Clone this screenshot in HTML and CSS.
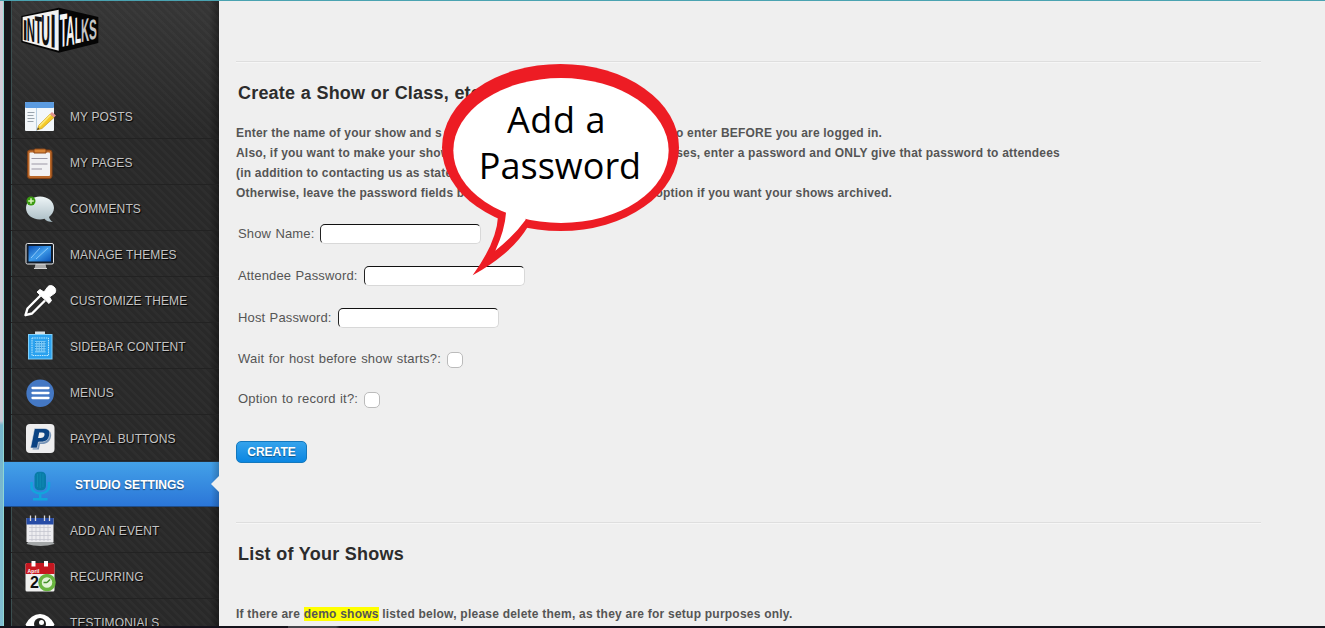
FILE: index.html
```html
<!DOCTYPE html>
<html lang="en">
<head>
    <meta charset="UTF-8">
    <meta name="viewport" content="width=device-width, initial-scale=1.0">
    <title>Studio Settings - IntuiTalks</title>
    <link rel="stylesheet" href="styles.css">
</head>
<body>
    <div class="page">
        <div class="window-edge"></div>
        <aside class="sidebar">
            <a href="#" class="logo">
                <svg width="80" height="46" viewBox="60 20 240 138">
                    <polygon points="64,47 176,22 295,50 295,128 176,157 64,126" fill="#050505"/>
                    <polygon points="68,50 176,28 176,151 68,122" fill="#f2f2f2"/>
                    <g class="logo-text" fill="#111">
                        <text transform="translate(68 118) skewY(10) scale(.75 1.28)">I</text>
                        <text transform="translate(80 121) skewY(9) scale(.5 1.45)">N</text>
                        <text transform="translate(104 127) skewY(9) scale(.52 1.7)">T</text>
                        <text transform="translate(124 132) skewY(9) scale(.53 1.88)">U</text>
                        <text transform="translate(151 140) skewY(10) scale(.9 2.1)">I</text>
                    </g>
                    <g class="logo-text" fill="#f4f4f4">
                        <text transform="translate(179 141) skewY(-11) scale(.54 2.08)">T</text>
                        <text transform="translate(198 137) skewY(-11) scale(.53 1.85)">A</text>
                        <text transform="translate(224 130) skewY(-11) scale(.46 1.65)">L</text>
                        <text transform="translate(243 126) skewY(-11) scale(.5 1.45)" fill="#c4c4c4">K</text>
                        <text transform="translate(267 119) skewY(-11) scale(.52 1.25)" fill="#c4c4c4">S</text>
                    </g>
                </svg>
            </a>
            <ul class="menu">
                <li><a href="#">
                    <svg class="icon" viewBox="0 0 32 32">
                        <rect x="1" y="2" width="29" height="29" rx="1" fill="#f3f7fa"/>
                        <rect x="1" y="2" width="29" height="6" rx="1" fill="#5b9be0"/>
                        <path d="M12.5 8v23" stroke="#b9cfe2"/>
                        <path d="M3.5 12.5h7M3.5 15.5h6M3.5 18.5h7M3.5 21.5h6" stroke="#9aa4ad"/>
                        <path d="M13 30l2-5L26 14l4 3.500L18 28.500z" fill="#f5ca28" stroke="#b98a12" stroke-width=".6"/>
                        <path d="M14.800 25.500L26 14l1.300 1.200L16 27z" fill="#fbe678"/>
                        <path d="M26 14l2-2 4 3.500-2 2z" fill="#e2948f"/>
                        <path d="M13 30l1-2.500 1.500 1.500z" fill="#444"/>
                    </svg>My Posts</a></li>
                <li><a href="#">
                    <svg class="icon" viewBox="0 0 32 32">
                        <rect x="3.500" y="4" width="24.500" height="28.500" rx="2.500" fill="#b9682a" stroke="#814015"/>
                        <rect x="5.500" y="6.500" width="20.500" height="23.500" rx="1" fill="#f1f1f3"/>
                        <path d="M10 7V4.500q0-1.500 1.500-1.500h9q1.500 0 1.500 1.500V7z" fill="#d88435" stroke="#8c4718"/>
                        <path d="M7.500 12.500h16M7.500 18h16M7.500 23h10.500" stroke="#9c98a5" stroke-width="1.200"/>
                    </svg>My Pages</a></li>
                <li><a href="#">
                    <svg class="icon" viewBox="0 0 32 32">
                        <defs><linearGradient id="bubble" x2="0" y2="1"><stop stop-color="#eef5f7"/><stop offset="1" stop-color="#a9bcc4"/></linearGradient></defs>
                        <path d="M16 4.500c8 0 14 5 14 11.500 0 4-2.500 7-5 9 .8 2.500 2 4 4 5-4 0-7-1-8.500-3.200-1.500.4-3 .6-4.500.6C8 27.400 2 22.500 2 16S8 4.500 16 4.500z" fill="url(#bubble)"/>
                        <circle cx="7" cy="9" r="4.500" fill="#3c9b13"/>
                        <path d="M7 6.200v5.600M4.200 9h5.600" stroke="#d9f5bd" stroke-width="1.500"/>
                    </svg>Comments</a></li>
                <li><a href="#">
                    <svg class="icon" viewBox="0 0 32 32">
                        <defs><linearGradient id="screen" x2="1" y2="1"><stop stop-color="#0b4fb5"/><stop offset=".5" stop-color="#3f9cea"/><stop offset="1" stop-color="#0a53b8"/></linearGradient></defs>
                        <path d="M11.500 26h10l1 4.500h-12z" fill="#aaa"/>
                        <path d="M10 30.500h13" stroke="#d5d5d5"/>
                        <rect x="2" y="5.500" width="27.500" height="20.500" rx="1.500" fill="#111b28" stroke="#e6e6e6"/>
                        <rect x="4.500" y="8" width="22.500" height="15.500" fill="url(#screen)"/>
                        <path d="M7 20l9-10M12 21L24 10" stroke="#8dcaf8" stroke-width="1"/>
                    </svg>Manage Themes</a></li>
                <li><a href="#">
                    <svg class="icon" viewBox="0 0 32 32">
                        <path d="M16.500 11.500L3.500 24.500 1.500 31.200 8 29.500 21 16.500" fill="#2a2a2a" stroke="#fff" stroke-width="2.400" stroke-linejoin="round"/>
                        <path d="M13 8l3-2.500 4 2.500 4-5.500C27-.500 34 4 31 9L25.500 13l2 3.500-2.500 3z" fill="#fff" stroke="#fff" stroke-linejoin="round"/>
                    </svg>Customize Theme</a></li>
                <li><a href="#">
                    <svg class="icon" viewBox="0 0 32 32">
                        <rect x="11" y="1.500" width="10" height="3" fill="#d5dee2"/>
                        <rect x="4.500" y="4.500" width="23.500" height="24.500" fill="#2ba2ef" stroke="#80d0fa"/>
                        <rect x="8" y="8" width="16.500" height="17.500" fill="none" stroke="#bce8fc" stroke-dasharray="1.500 .8"/>
                        <rect x="11" y="11" width="10.500" height="11.500" fill="#79c8f6"/>
                        <path d="M11 12.500h11M11 15h11M11 17.500h11M11 20h11" stroke="#1484d2" stroke-dasharray="1.200 1.200"/>
                    </svg>Sidebar Content</a></li>
                <li><a href="#">
                    <svg class="icon" viewBox="0 0 32 32">
                        <circle cx="16.200" cy="17.200" r="13.800" fill="#4478c4"/>
                        <path d="M8.500 12h16M8.500 17h16M8.500 22h16" stroke="#fff" stroke-width="2.300" stroke-linecap="round"/>
                    </svg>Menus</a></li>
                <li><a href="#">
                    <svg class="icon" viewBox="0 0 32 32">
                        <rect x="2" y="2" width="28.500" height="29" rx="4" fill="#eeeeef"/>
                        <path d="M12 9.500h14c1.500 2 1.500 4 .5 7-1.500 4-4.500 5.500-8.500 5.500h-2l-1.200 5.500H8.500z" fill="#7794b7"/>
                        <path d="M10.500 6.500H20c5 0 6.500 3 5.500 7-1 4.500-4 6.500-8.500 6.500h-2.500L13.200 26H6.500z" fill="#0b4383" stroke="#eeeeef" stroke-width=".6"/>
                        <path d="M15.200 10.500h2.800c2 0 2.800.8 2.500 2.500-.3 2-1.800 3-4 3h-2.400z" fill="#eeeeef"/>
                    </svg>Paypal Buttons</a></li>
                <li class="active"><a href="#">
                    <svg class="icon" viewBox="0 0 32 32">
                        <path d="M7.500 14v4c0 10 17.500 10 17.500 0v-4M16.200 25.500V31M9 31.200h14.500" fill="none" stroke="#12a5dc" stroke-width="2.500"/>
                        <rect x="10.500" y="3.700" width="11.500" height="18.500" rx="4.500" fill="#087ca8"/>
                        <path d="M13.500 6v13M16.200 5v15M19 6v13" stroke="#1291b5" stroke-width=".8"/>
                    </svg>Studio Settings</a></li>
                <li><a href="#">
                    <svg class="icon" viewBox="0 0 32 32">
                        <path d="M4 28h25l1.500 2q-14 4-28 0z" fill="#a5a8a9"/>
                        <rect x="2.500" y="4" width="27" height="24" fill="#ededf0"/>
                        <path d="M2.500 4h27v6.500h-27z" fill="#264ba5"/>
                        <path d="M5 13.500h22M5 17.500h22M5 21.500h22M5 25.500h22M8 11v16M12 11v16M16 11v16M20 11v16M24 11v16" stroke="#c0c2cb" stroke-width=".7"/>
                        <path d="M6.500 1.500V7M11.500 1.500V7M20.500 1.500V7M25.500 1.500V7" stroke="#d7d7d7" stroke-width="1.300"/>
                    </svg>Add an Event</a></li>
                <li><a href="#">
                    <svg class="icon" viewBox="0 0 32 32">
                        <rect x="1.500" y="3" width="29" height="28.500" rx="1.500" fill="#f0f0ef"/>
                        <path d="M1.500 14V4.500Q1.500 3 3 3h26q1.500 0 1.500 1.500V14z" fill="#c61720"/>
                        <path d="M9.500 1v5.500M22 1v5.500" stroke="#fff" stroke-width="4"/>
                        <text x="3.500" y="13" class="cal-month">April</text>
                        <text x="6" y="27.500" class="cal-day">2</text>
                        <circle cx="23" cy="22.500" r="7" fill="#e2f3d6" stroke="#69b53f" stroke-width="3.500"/>
                        <path d="M23 22.500l3-3M23 22.500h-3.500" stroke="#43902a" stroke-width="1.500"/>
                    </svg>Recurring</a></li>
                <li><a href="#">
                    <svg class="icon" viewBox="0 0 32 32">
                        <path d="M1.500 18.500Q7 8 16 8t14.500 10.500Q25 29 16 29T1.500 18.500z" fill="#fff"/>
                        <circle cx="16" cy="18" r="6" fill="#202020"/>
                        <circle cx="17.500" cy="16.500" r="2.500" fill="#fff"/>
                    </svg>Testimonials</a></li>
            </ul>
        </aside>

        <main class="content">
            <section class="create-show">
                <h2>Create a Show or Class, etc</h2>
                <div class="intro">
                    <p class="line-before"><span>Enter the name of your show and s</span><span>to enter BEFORE you are logged in.</span></p>
                    <p class="line-private"><span>Also, if you want to make your show</span><span>ses, enter a password and ONLY give that password to attendees</span></p>
                    <p><span>(in addition to contacting us as stated</span></p>
                    <p class="line-archive"><span>Otherwise, leave the password fields b</span><span>option if you want your shows archived.</span></p>
                </div>
                <form>
                    <div class="field"><label for="show-name">Show Name:</label><input type="text" id="show-name"></div>
                    <div class="field"><label for="attendee-pw">Attendee Password:</label><input type="text" id="attendee-pw"></div>
                    <div class="field"><label for="host-pw">Host Password:</label><input type="text" id="host-pw"></div>
                    <div class="field check"><label for="wait">Wait for host before show starts?:</label><input type="checkbox" id="wait"></div>
                    <div class="field check"><label for="record">Option to record it?:</label><input type="checkbox" id="record"></div>
                    <button type="button" class="create-btn">CREATE</button>
                </form>
            </section>
            <section class="show-list">
                <h2>List of Your Shows</h2>
                <p class="note">If there are <mark>demo shows</mark> listed below, please delete them, as they are for setup purposes only.</p>
            </section>
        </main>

        <div class="callout">
            <svg width="240" height="214" viewBox="30 36 720 642">
                <ellipse cx="391.500" cy="292.500" rx="355.500" ry="250.500" fill="#ed1c24"/>
                <path d="M204 500Q200 576 128 676Q246 610 293 531L250 470z" fill="#ed1c24"/>
                <ellipse cx="393" cy="301.500" rx="323" ry="217.500" fill="#fff"/>
                <path d="M228 488Q225 538 196 602Q250 560 287 509L270 440L228 460z" fill="#fff"/>
            </svg>
            <p><span>Add a</span><br>Password</p>
        </div>
        <div class="bottom-bar"></div>
    </div>
</body>
</html>
```
FILE: styles.css
```css
* {
    margin: 0;
    padding: 0;
    box-sizing: border-box;
}

body {
    font-family: "Liberation Sans", Arial, sans-serif;
    font-size: 12px;
    color: #555;
    background-color: #efefef;
}

.page {
    position: relative;
    display: flex;
    height: 628px;
    overflow: hidden;
    border-top: 1px solid #4aa3b1;
}

.window-edge {
    width: 4px;
    background: linear-gradient(#d3cbd8 0, #c9c4d2 420px, #75b4cc 424px, #80bdd2 100%);
    border-right: 1px solid #8fd6d2;
}

/* sidebar */
.sidebar {
    width: 215px;
    padding-left: 7px;
    background:
        linear-gradient(to right, #17171b 7px, #3b4f50 7px, #3b4f50 8px, transparent 8px),
        linear-gradient(to left, rgba(0,0,0,0.35), transparent 10px),
        repeating-linear-gradient(-135deg, rgba(255,255,255,0.025) 0, rgba(255,255,255,0.025) 2px, transparent 3px, transparent 6px),
        linear-gradient(#363636, #292929 130px);
}

.logo {
    display: block;
    height: 92px;
    padding: 6px 0 0 9px;
}

.logo svg {
    overflow: visible;
}

.logo-text {
    font-size: 68px;
    font-weight: bold;
}

.menu {
    list-style: none;
}

.menu li {
    position: relative;
    height: 46px;
    border-bottom: 1px solid #222;
}

.menu a {
    display: flex;
    align-items: center;
    gap: 14px;
    height: 46px;
    padding: 1px 0 0 13px;
    color: #c4c4c4;
    text-decoration: none;
    text-transform: uppercase;
    letter-spacing: 0.12px;
    text-shadow: 1px 1px 1px #000;
}

.icon {
    width: 32px;
    height: 32px;
    margin-bottom: 2px;
    flex: none;
    overflow: visible;
}

.menu .active {
    margin-left: -7px;
    border-bottom-color: #1f4d8a;
    border-top: 1px solid #252f3a;
    background: linear-gradient(to left, rgba(0,0,0,0.2), transparent 8px), linear-gradient(#43a1e8, #2b76d8);
}

.menu .active a {
    gap: 19px;
    height: 44px;
    padding-left: 20px;
    color: #fff;
    font-weight: bold;
    letter-spacing: 0.05px;
    text-shadow: 0 1px 1px rgba(0,0,0,0.5);
}

.menu .active::after {
    content: "";
    position: absolute;
    right: 0;
    top: 14px;
    border: 8px solid transparent;
    border-left: 0;
    border-right-color: #efefef;
}

.cal-month {
    font-size: 5px;
    font-weight: bold;
    fill: #fff;
    text-shadow: none;
    text-transform: none;
}

.cal-day {
    font-size: 16px;
    font-weight: bold;
    fill: #111;
    text-shadow: none;
}

/* main content */
.content {
    flex: 1;
    padding: 60px 64px 0 17px;
}

.create-show,
.show-list {
    border-top: 1px solid #dedede;
    box-shadow: inset 0 1px 0 #f6f6f6;
}

.create-show {
    height: 461px;
    padding-top: 20px;
}

h2 {
    padding-left: 2px;
    font-size: 18px;
    line-height: 22px;
    letter-spacing: 0.2px;
    word-spacing: 0.3px;
    color: #2c2c2c;
}

.intro {
    margin-top: 19px;
    font-weight: bold;
    line-height: 20px;
}

.intro p {
    display: flex;
    justify-content: space-between;
    letter-spacing: 0.2px;
}

.line-before {
    width: 646px;
}

.line-private {
    width: 824px;
}

.line-archive {
    width: 656px;
}

form {
    padding-top: 19px;
}

.field {
    display: flex;
    align-items: center;
    gap: 6px;
    height: 22px;
    margin-bottom: 20px;
    padding-left: 2px;
    font-size: 13px;
    letter-spacing: 0.15px;
    word-spacing: 0.5px;
}

.field input[type="text"] {
    width: 161px;
    height: 20px;
    margin-top: 2px;
    background: #fff;
    border: 1px solid #d8d8d8;
    border-top-color: #111;
    border-left-color: #222;
    border-radius: 5px;
}

.check {
    height: 20px;
    letter-spacing: 0.2px;
    word-spacing: 0.6px;
}

.check input {
    appearance: none;
    width: 16px;
    height: 16px;
    margin-top: 4px;
    background: #fff;
    border: 1px solid #bbb;
    border-radius: 5px;
}

.create-btn {
    display: block;
    width: 71px;
    height: 22px;
    margin-top: 33px;
    border: 1px solid #1478bd;
    border-radius: 5px;
    background: linear-gradient(#35a3ec, #0a86e2);
    color: #fff;
    font: bold 12px "Liberation Sans", Arial, sans-serif;
    text-shadow: 0 1px 1px rgba(0,0,0,0.4);
}

.show-list {
    padding-top: 20px;
}

.note {
    margin-top: 39px;
    font-weight: bold;
    line-height: 20px;
    letter-spacing: 0.23px;
}

mark {
    background: #ff0;
    color: #555;
}

/* speech bubble over the form */
.callout {
    position: absolute;
    left: 440px;
    top: 61px;
    width: 240px;
    height: 214px;
}

.callout p {
    position: absolute;
    left: 0;
    top: 35px;
    width: 240px;
    text-align: center;
    font: 36px/46px "Open Sans", "Noto Sans", sans-serif;
    color: #000;
}

.callout span {
    padding-right: 7px;
    letter-spacing: 0.6px;
}

.bottom-bar {
    position: absolute;
    left: 0;
    right: 0;
    bottom: 0;
    height: 2px;
    background: linear-gradient(to right, #15131c 288px, #45454b 288px, #45454b 336px, #15131c 340px);
}
```
